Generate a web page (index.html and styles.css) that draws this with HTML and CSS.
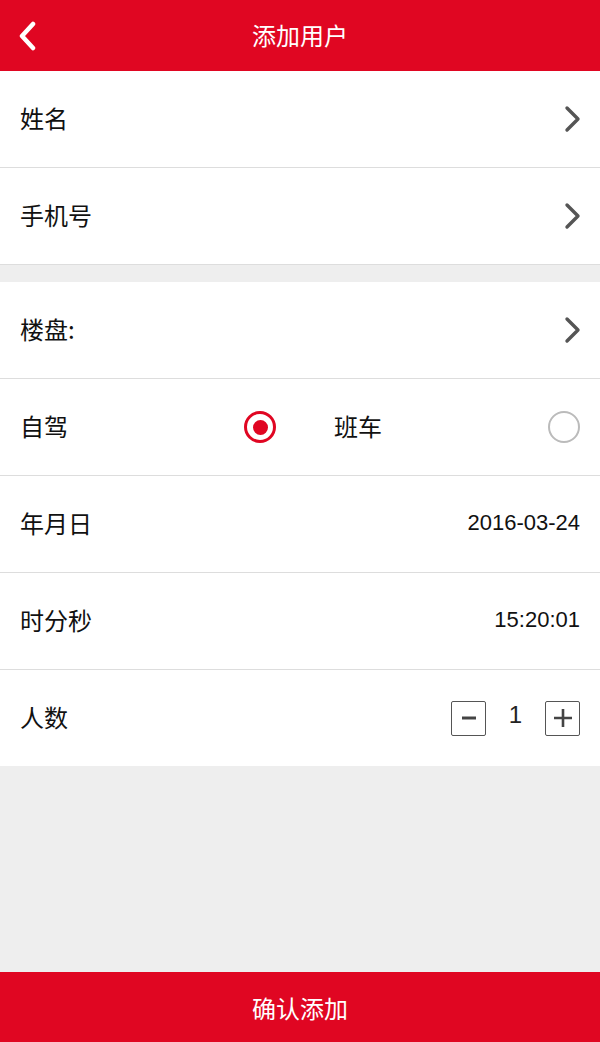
FILE: index.html
```html
<!DOCTYPE html>
<html lang="zh">
<head>
<meta charset="utf-8">
<title>添加用户</title>
<link rel="stylesheet" href="styles.css">
</head>
<body>
<div class="app">
  <header class="topbar">
    <svg class="back" width="20" height="30" viewBox="0 0 20 30"><path d="M16 3 L5 15 L16 27" fill="none" stroke="#fff" stroke-width="4.5" stroke-linecap="round" stroke-linejoin="round"/></svg>
    <h1 class="title">添加用户</h1>
  </header>

  <section class="group">
    <div class="row">
      <span class="label">姓名</span>
      <svg class="chev" width="18" height="28" viewBox="0 0 18 28"><path d="M3 3 L14 14 L3 25" fill="none" stroke="#555" stroke-width="3.4" stroke-linecap="round" stroke-linejoin="round"/></svg>
    </div>
    <div class="row">
      <span class="label">手机号</span>
      <svg class="chev" width="18" height="28" viewBox="0 0 18 28"><path d="M3 3 L14 14 L3 25" fill="none" stroke="#555" stroke-width="3.4" stroke-linecap="round" stroke-linejoin="round"/></svg>
    </div>
  </section>

  <section class="group gap">
    <div class="row">
      <span class="label">楼盘:</span>
      <svg class="chev" width="18" height="28" viewBox="0 0 18 28"><path d="M3 3 L14 14 L3 25" fill="none" stroke="#555" stroke-width="3.4" stroke-linecap="round" stroke-linejoin="round"/></svg>
    </div>
    <div class="row radios">
      <span class="label">自驾</span>
      <span class="radio on"></span>
      <span class="label second">班车</span>
      <span class="radio"></span>
    </div>
    <div class="row">
      <span class="label">年月日</span>
      <span class="value">2016-03-24</span>
    </div>
    <div class="row">
      <span class="label">时分秒</span>
      <span class="value">15:20:01</span>
    </div>
    <div class="row last">
      <span class="label">人数</span>
      <div class="stepper">
        <span class="step"><svg width="20" height="20" viewBox="0 0 20 20"><path d="M3 10 H17" stroke="#444" stroke-width="3"/></svg></span>
        <span class="count">1</span>
        <span class="step"><svg width="22" height="22" viewBox="0 0 22 22"><path d="M2 11 H20 M11 2 V20" stroke="#444" stroke-width="2.6"/></svg></span>
      </div>
    </div>
  </section>

  <div class="spacer"></div>

  <footer class="confirm">确认添加</footer>
</div>
</body>
</html>
```

FILE: styles.css
```css
html, body {
  margin: 0;
  padding: 0;
}
body {
  background: #eeeeee;
  font-family: "Noto Sans CJK SC", "Liberation Sans", sans-serif;
  color: #111;
}
.app {
  width: 600px;
  height: 1042px;
  display: flex;
  flex-direction: column;
  background: #eeeeee;
}
.topbar {
  height: 71px;
  background: #e00622;
  display: flex;
  align-items: center;
  justify-content: center;
  position: relative;
}
.back {
  position: absolute;
  left: 17px;
  top: 21px;
}
.title {
  margin: 0 0 2px;
  font-size: 24px;
  font-weight: 400;
  color: #fff;
  line-height: 1;
}
.group {
  background: #fff;
}
.gap {
  margin-top: 17px;
}
.row {
  height: 96px;
  border-bottom: 1px solid #dddddd;
  display: flex;
  align-items: center;
  justify-content: space-between;
  padding: 0 18px 0 20px;
}
.row.last {
  border-bottom: none;
}
.label {
  font-size: 24px;
  line-height: 1;
  color: #111;
  margin-top: -3px;
}
.value {
  font-family: "Liberation Sans", sans-serif;
  font-size: 22px;
  color: #111;
  padding-right: 2px;
  margin-top: -2px;
}
.radios {
  display: grid;
  grid-template-columns: 224px 32px 1fr 32px;
  align-items: center;
  padding: 0 20px;
}
.label.second {
  padding-left: 58px;
}
.radio {
  width: 32px;
  height: 32px;
  box-sizing: border-box;
  border-radius: 50%;
  border: 2.5px solid #bbbbbb;
  display: flex;
  align-items: center;
  justify-content: center;
}
.radio.on {
  border: 3px solid #e00622;
}
.radio.on::after {
  content: "";
  width: 15px;
  height: 15px;
  border-radius: 50%;
  background: #e00622;
}
.stepper {
  display: flex;
  align-items: center;
  padding-right: 2px;
}
.step {
  width: 35px;
  height: 35px;
  box-sizing: border-box;
  border: 1.5px solid #555;
  border-radius: 2px;
  display: flex;
  align-items: center;
  justify-content: center;
}
.count {
  width: 59px;
  text-align: center;
  font-family: "Liberation Sans", sans-serif;
  font-size: 24px;
  color: #222;
  margin-top: -6px;
}
.spacer {
  flex: 1;
}
.confirm {
  height: 70px;
  background: #e00622;
  color: #fff;
  font-size: 24px;
  display: flex;
  align-items: center;
  justify-content: center;
}
```
